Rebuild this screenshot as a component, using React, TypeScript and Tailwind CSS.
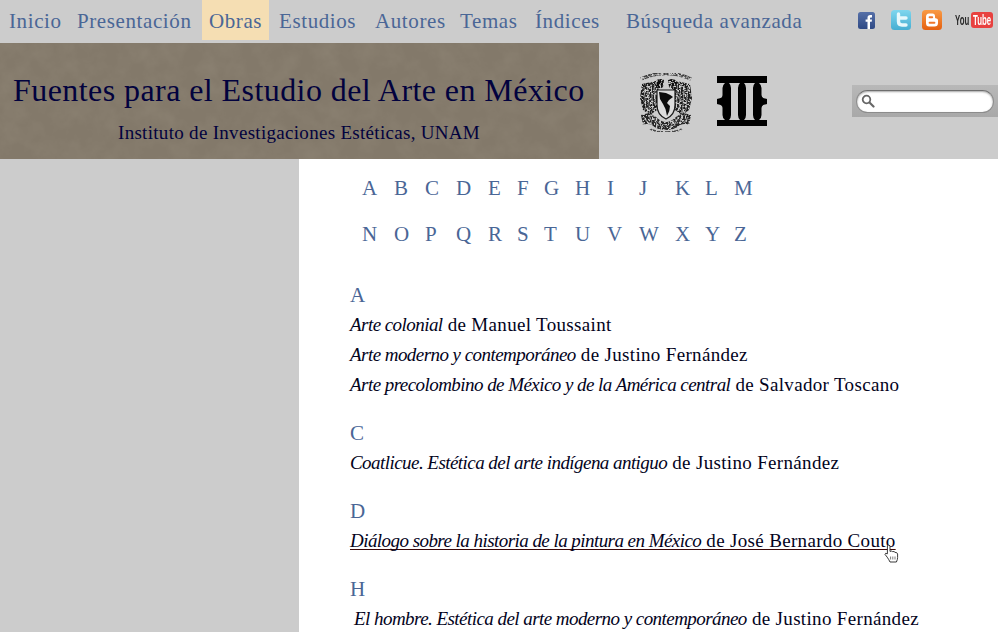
const serif = "font-['Liberation_Serif','Noto_Serif',serif]";

const navItems = [
  { label: "Inicio", width: "w-[68px] pl-[7px]" },
  { label: "Presentación", width: "w-[132px] pl-[7px]" },
  { label: "Obras", width: "w-[67px] justify-center bg-[#f5deb3]" },
  { label: "Estudios", width: "w-[99px] pl-[10px]" },
  { label: "Autores", width: "w-[85px] pl-[7px]" },
  { label: "Temas", width: "w-[75px] pl-[7px]" },
  { label: "Índices", width: "w-[91px] pl-[7px]" },
  { label: "Búsqueda avanzada", width: "w-[214px] pl-[7px]" },
];

const columns = ["w-[32px]", "w-[31px]", "w-[31px]", "w-[32px]", "w-[29px]", "w-[27px]", "w-[31px]", "w-[32px]", "w-[32px]", "w-[36px]", "w-[30px]", "w-[29px]", "w-[30px]"];
const rowOne = ["A", "B", "C", "D", "E", "F", "G", "H", "I", "J", "K", "L", "M"];
const rowTwo = ["N", "O", "P", "Q", "R", "S", "T", "U", "V", "W", "X", "Y", "Z"];

const sections = [
  {
    letter: "A",
    works: [
      { title: "Arte colonial", author: " de Manuel Toussaint" },
      { title: "Arte moderno y contemporáneo", author: " de Justino Fernández" },
      { title: "Arte precolombino de México y de la América central", author: " de Salvador Toscano" },
    ],
  },
  {
    letter: "C",
    works: [{ title: "Coatlicue. Estética del arte indígena antiguo", author: " de Justino Fernández" }],
  },
  {
    letter: "D",
    works: [{ title: "Diálogo sobre la historia de la pintura en México", author: " de José Bernardo Couto", hover: true }],
  },
  {
    letter: "H",
    works: [{ title: "El hombre. Estética del arte moderno y contemporáneo", author: " de Justino Fernández", indent: true }],
  },
];

function SocialIcons() {
  return (
    <div className="flex items-center">
      <svg width="17" height="17" viewBox="0 0 17 17" className="block">
        <defs>
          <linearGradient id="fb" x1="0" y1="0" x2="0" y2="1">
            <stop offset="0" stopColor="#5670a8" />
            <stop offset="1" stopColor="#2f4a85" />
          </linearGradient>
        </defs>
        <rect width="17" height="17" rx="2.5" fill="url(#fb)" />
        <path d="M9.5 17 V9.8 H7.6 V7.4 H9.5 V5.8 Q9.5 3 12.2 3 H14 V5.4 H12.8 Q12 5.4 12 6.2 V7.4 H14 L13.7 9.8 H12 V17 Z" fill="#fff" />
      </svg>
      <svg width="20" height="20" viewBox="0 0 20 20" className="ml-[16px] block">
        <defs>
          <linearGradient id="tw" x1="0" y1="0" x2="0" y2="1">
            <stop offset="0" stopColor="#7fd6ee" />
            <stop offset="1" stopColor="#46aed2" />
          </linearGradient>
        </defs>
        <rect width="20" height="20" rx="3.5" fill="url(#tw)" />
        <path d="M7.5 4 V11.5 Q7.5 15 11 15 H15 M7.5 8 H15" fill="none" stroke="#e6f8fc" strokeWidth="3.4" strokeLinecap="round" />
      </svg>
      <svg width="20" height="20" viewBox="0 0 20 20" className="ml-[11px] block">
        <defs>
          <linearGradient id="bl" x1="0" y1="0" x2="0" y2="1">
            <stop offset="0" stopColor="#f99b45" />
            <stop offset="1" stopColor="#e5600f" />
          </linearGradient>
        </defs>
        <rect width="20" height="20" rx="3.5" fill="url(#bl)" />
        <path d="M7 3.5 H10.5 Q13 3.5 13 6 V7.5 Q13 8.5 14.5 8.5 Q16 8.5 16 10.5 V13 Q16 16.5 12.5 16.5 H7 Q4 16.5 4 13 V7 Q4 3.5 7 3.5 Z" fill="#fff" />
        <path d="M7.6 7.2 H10.2 M7.6 12.8 H12.4" stroke="#f0772a" strokeWidth="2" strokeLinecap="round" />
      </svg>
      {/* YouTube: letra condensada */}
      <div className="ml-[13px] flex h-[16px] w-[38px] items-center font-['Liberation_Sans',sans-serif] text-[14px] font-bold leading-[16px]">
        <div className="h-[16px] w-[16px] shrink-0">
          <span className="inline-block origin-left scale-x-[0.56] whitespace-nowrap text-[#2a2a2a]">You</span>
        </div>
        <div className="h-[16px] w-[22px] shrink-0 overflow-hidden rounded-[3px] bg-[#e8413f] pl-[1.5px]">
          <span className="inline-block origin-left scale-x-[0.56] whitespace-nowrap text-white">Tube</span>
        </div>
      </div>
    </div>
  );
}

function HalfCrest() {
  return (
    <g>
      {/* ala */}
      <path d="M6 16 L20 13 L23 24 L21 42 L14 47 L7 42 L4 30 Z" fill="#1c1c1c" />
      <path d="M8 19 L10 42 M11.5 17 L13.5 44 M15 16 L17 43 M18.5 16 L19.5 38" stroke="#a8a8a8" strokeWidth="0.8" fill="none" />
      {/* cabeza */}
      <path d="M19 14 Q22 9 28 12 L27 19 L22 22 Z" fill="#111" />
      {/* corona */}
      <path d="M5 11 Q17 5.5 30 5.5" stroke="#3a3a3a" strokeWidth="3.4" fill="none" />
      <path d="M6 11 Q17 6 30 6" stroke="#c8c8c8" strokeWidth="1" strokeDasharray="1.8 1.2" fill="none" />
      {/* hojas */}
      <path d="M5 47 Q13 43 20 49 Q25 54 30 54 L30 62 Q21 62 16 57 Q11 55 7 57 Z" fill="#262626" />
      <path d="M8 49 L12 55 M13 47 L16 54 M18 50 L22 58 M23 53 L26 60" stroke="#bbbbbb" strokeWidth="0.8" />
      <path d="M14 61 Q20 64 30 64" stroke="#444" strokeWidth="1.4" fill="none" />
    </g>
  );
}

function UnamShield() {
  return (
    <svg width="60" height="66" viewBox="0 0 60 66" className="block">
      <defs>
        <filter id="soft" x="0" y="0" width="100%" height="100%">
          <feTurbulence type="fractalNoise" baseFrequency="0.55" numOctaves="2" seed="3" result="grain" />
          <feColorMatrix in="grain" values="0 0 0 0 0  0 0 0 0 0  0 0 0 0 0  0 0 0 6 -2.1" result="mask" />
          <feComposite in="SourceGraphic" in2="mask" operator="in" />
          <feGaussianBlur stdDeviation="0.4" />
        </filter>
        <filter id="soft2">
          <feGaussianBlur stdDeviation="0.45" />
        </filter>
      </defs>
      <g filter="url(#soft)">
        <HalfCrest />
        <g transform="translate(60,0) scale(-1,1)">
          <HalfCrest />
        </g>
      </g>
      <g filter="url(#soft2)">
        <path d="M21 22 H39 V37 Q39 47 30 51 Q21 47 21 37 Z" fill="#dcdcdc" stroke="#1a1a1a" strokeWidth="1.2" />
        <path d="M23 24 L30 25 Q35 27 37 29 L33 32 L31 35 L34 38 Q34 43 31 48 L29.5 41 L27 36 L24 31 Z" fill="#0c0c0c" />
      </g>
    </svg>
  );
}

function IieLogo() {
  return (
    <svg width="50" height="50" viewBox="0 0 50 50" className="block">
      <rect width="50" height="50" fill="#000" />
      <path d="M12 7 H23 Q21 9 21 12 V39 Q21 42 23 44 H12 Q14 42 14 39 V12 Q14 9 12 7 Z" fill="#ccc" />
      <path d="M27 7 H38 Q36 9 36 12 V39 Q36 42 38 44 H27 Q29 42 29 39 V12 Q29 9 27 7 Z" fill="#ccc" />
      <path d="M0 7 H8 Q5.5 9 5.5 12 V19 Q5.5 22 2 22.5 Q0.5 22.8 0 23 Z" fill="#ccc" />
      <path d="M0 28 Q0.5 28.2 2 28.5 Q5.5 29 5.5 32 V39 Q5.5 42 8 44 H0 Z" fill="#ccc" />
      <path d="M50 7 H42 Q44.5 9 44.5 12 V19 Q44.5 22 48 22.5 Q49.5 22.8 50 23 Z" fill="#ccc" />
      <path d="M50 28 Q49.5 28.2 48 28.5 Q44.5 29 44.5 32 V39 Q44.5 42 42 44 H50 Z" fill="#ccc" />
    </svg>
  );
}

function HandCursor() {
  return (
    <svg width="15" height="19" viewBox="0 0 15 19" className="absolute left-[534px] top-[18px]">
      <path
        d="M3.4 1.8 Q4.8 0.3 6 1.8 V7.4 Q7.8 6.6 8.6 7.6 Q10.4 7.1 11 8.4 Q13 8 13.6 10 V13.5 Q13.6 15.5 12.4 18 H6 Q5 15.8 3.2 13.2 L1 10.4 Q1 8.6 3.4 9.8 Z"
        fill="#fff"
        stroke="#222"
        strokeWidth="0.9"
      />
      <path d="M6.6 12.5 V15.5 M8.8 12.5 V15.5 M11 12.5 V15.5" stroke="#444" strokeWidth="0.7" />
    </svg>
  );
}

export default function App() {
  return (
    <div className={`h-[632px] w-[998px] overflow-hidden bg-[#cccccc] ${serif}`}>
      {/* menu */}
      <div className="flex h-[43px] items-start justify-between">
        <nav className="flex h-[40px] pl-[2px]">
          {navItems.map((item) => (
            <a
              key={item.label}
              className={`${item.width} flex h-[40px] items-center whitespace-nowrap pt-[3px] text-[21px] tracking-[0.6px] text-[#4a6696]`}
            >
              {item.label}
            </a>
          ))}
        </nav>
        <div className="mt-[10px] mr-[5px]">
          <SocialIcons />
        </div>
      </div>

      {/* cabecera */}
      <div className="flex h-[116px]">
        <div className="relative h-[116px] w-[599px] shrink-0 overflow-hidden bg-[#83796a]">
          <svg className="absolute inset-0" width="599" height="116">
            <filter id="paper">
              <feTurbulence type="fractalNoise" baseFrequency="0.05" numOctaves="4" seed="7" />
              <feColorMatrix values="0 0 0 0 0.3  0 0 0 0 0.26  0 0 0 0 0.2  0.7 0 0 0 -0.26" />
            </filter>
            <rect width="599" height="116" filter="url(#paper)" />
          </svg>
          <div className="relative whitespace-nowrap pl-[13px] pt-[28px] text-[32px] leading-[38px] tracking-[0.43px] text-[#02023e]">
            Fuentes para el Estudio del Arte en México
          </div>
          <div className="relative whitespace-nowrap pl-[118px] pt-[12px] text-[19px] leading-[24px] tracking-[0.3px] text-[#02023e]">
            Instituto de Investigaciones Estéticas, UNAM
          </div>
        </div>
        <div className="ml-[37px] mt-[25px]">
          <UnamShield />
        </div>
        <div className="ml-[21px] mt-[33px]">
          <IieLogo />
        </div>
        <div className="ml-[85px] mt-[42px] flex h-[32px] w-[146px] items-center bg-gradient-to-b from-[#b8b8b8] to-[#a8a8a8] pl-[4px]">
          <div className="flex h-[23px] w-[138px] items-center rounded-full border border-[#8c8c8c] border-t-[#6e6e6e] bg-white pl-[4px] shadow-[inset_0_1px_2px_rgba(0,0,0,0.35)]">
            <svg width="14" height="14" viewBox="0 0 14 14">
              <circle cx="5.5" cy="5.5" r="3.8" fill="none" stroke="#666" strokeWidth="1.8" />
              <path d="M8.5 8.5 L12.5 12.5" stroke="#666" strokeWidth="2.2" strokeLinecap="round" />
            </svg>
          </div>
        </div>
      </div>

      <div className="flex">
        <div className="w-[299px] shrink-0" />
        <main className="h-[473px] flex-1 bg-white">
          <div className="pt-[7px] pl-[63px]">
            {[rowOne, rowTwo].map((row, r) => (
              <div key={r} className="flex h-[46px] items-center">
                {row.map((letter, i) => (
                  <a key={letter} className={`${columns[i]} text-[21px] text-[#4a6696]`}>
                    {letter}
                  </a>
                ))}
              </div>
            ))}
          </div>
          <div className="pt-[22px] pl-[51px]">
            {sections.map((section) => (
              <div key={section.letter} className="mb-[18px]">
                <h3 className="h-[30px] text-[21px] leading-[30px] text-[#4a6696]">{section.letter}</h3>
                {section.works.map((work) => (
                  <div key={work.title} className="relative h-[30px] whitespace-nowrap text-[19px] leading-[30px] tracking-[0.33px] text-[#03031c]">
                    <a className={`${work.hover ? "underline decoration-[#3a0808] decoration-1 underline-offset-2 [text-decoration-skip-ink:none]" : ""} ${work.indent ? "pl-[4px]" : ""}`}>
                      <i className="tracking-[-0.55px]">{work.title}</i>
                      {work.author}
                    </a>
                    {work.hover && <HandCursor />}
                  </div>
                ))}
              </div>
            ))}
          </div>
        </main>
      </div>
    </div>
  );
}
